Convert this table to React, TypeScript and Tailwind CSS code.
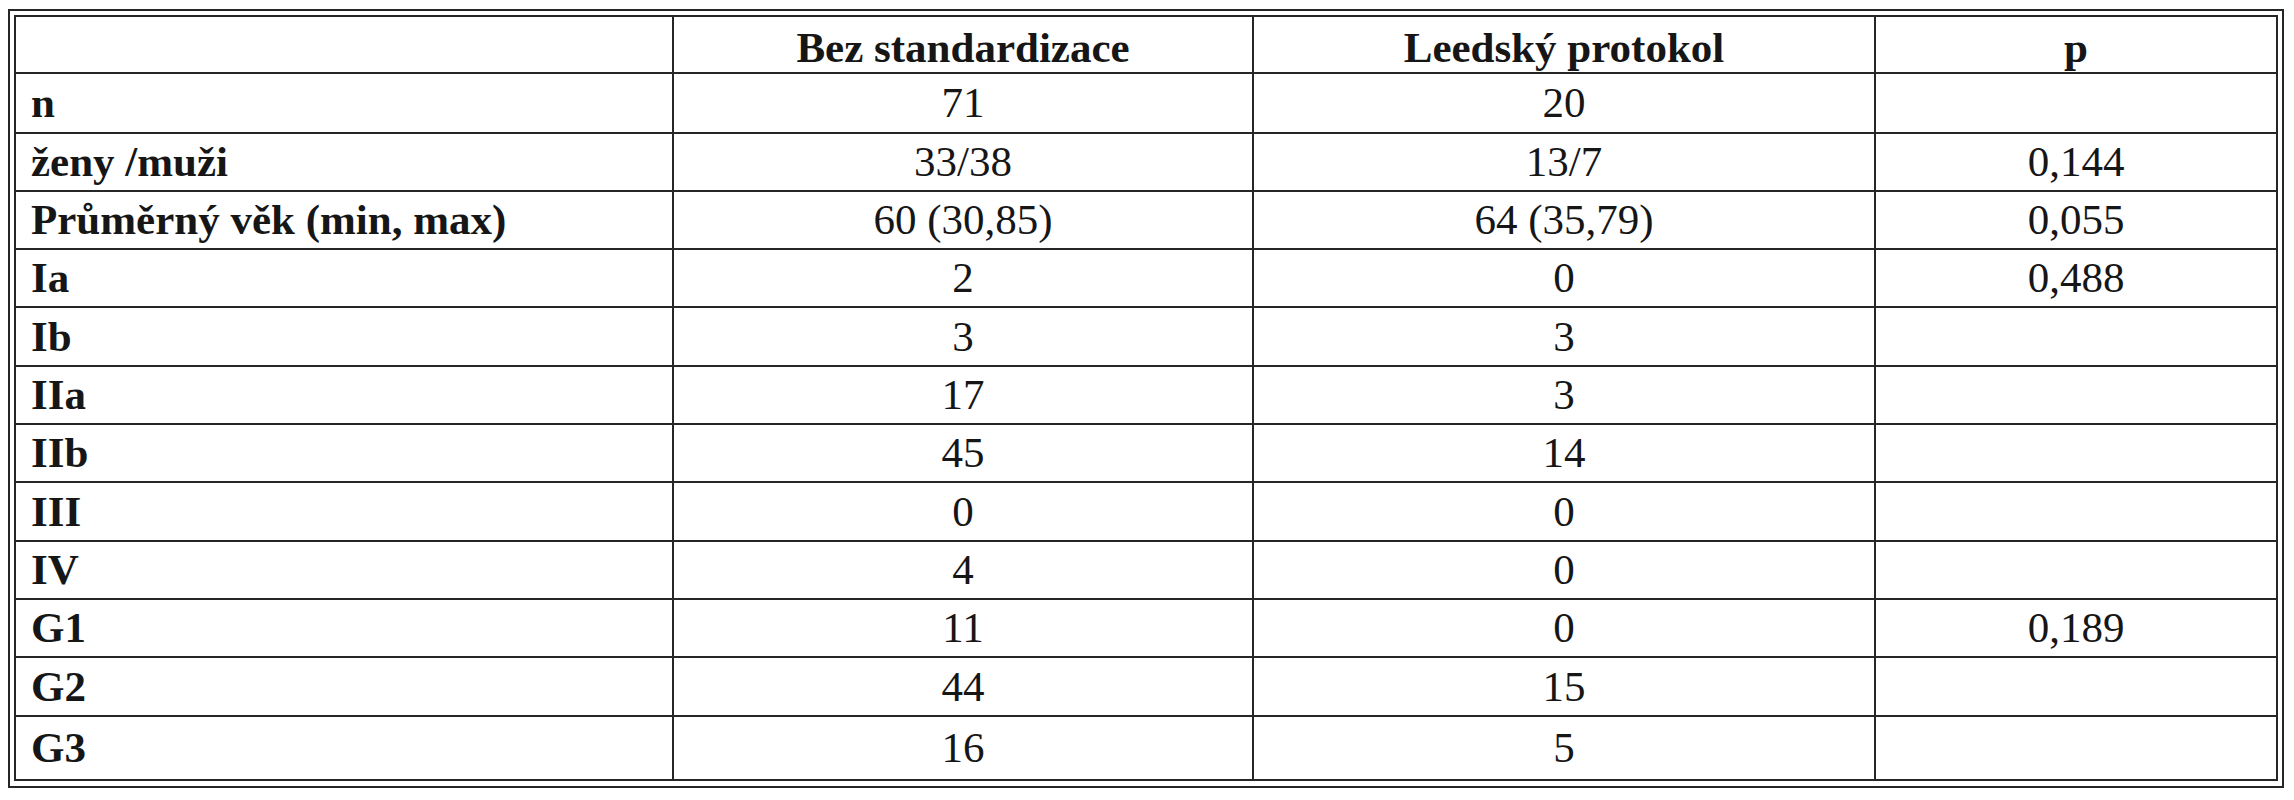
import React from "react";

type Row = { label: string; a: string; b: string; p: string; h: string };

const rows: Row[] = [
  { label: "n", a: "71", b: "20", p: "", h: "h-[60px]" },
  { label: "ženy /muži", a: "33/38", b: "13/7", p: "0,144", h: "h-[58px]" },
  { label: "Průměrný věk (min, max)", a: "60 (30,85)", b: "64 (35,79)", p: "0,055", h: "h-[58px]" },
  { label: "Ia", a: "2", b: "0", p: "0,488", h: "h-[58px]" },
  { label: "Ib", a: "3", b: "3", p: "", h: "h-[59px]" },
  { label: "IIa", a: "17", b: "3", p: "", h: "h-[58px]" },
  { label: "IIb", a: "45", b: "14", p: "", h: "h-[58px]" },
  { label: "III", a: "0", b: "0", p: "", h: "h-[59px]" },
  { label: "IV", a: "4", b: "0", p: "", h: "h-[58px]" },
  { label: "G1", a: "11", b: "0", p: "0,189", h: "h-[58px]" },
  { label: "G2", a: "44", b: "15", p: "", h: "h-[59px]" },
  { label: "G3", a: "16", b: "5", p: "", h: "h-[64px]" },
];

export default function App() {
  return (
    <div
      className="min-h-[800px] bg-white pt-[9px] pl-[8px] text-[#161616]"
      style={{ fontFamily: '"Liberation Serif", "Times New Roman", serif' }}
    >
      <div className="w-[2276px] border-2 border-[#262626] p-[4px] pb-[5px]">
        <div className="flex flex-col border-2 border-[#262626] text-[43px] leading-[1.15]">
          <div className="flex h-[55px] font-bold">
            <div className="w-[656px]" />
            <div className="flex w-[580px] items-center justify-center border-l-2 border-[#262626] pt-[6px]">
              Bez standardizace
            </div>
            <div className="flex w-[622px] items-center justify-center border-l-2 border-[#262626] pt-[6px]">
              Leedský protokol
            </div>
            <div className="flex w-[402px] items-center justify-center border-l-2 border-[#262626] pt-[6px]">
              p
            </div>
          </div>
          {rows.map((r) => (
            <div key={r.label} className={`flex border-t-2 border-[#262626] ${r.h}`}>
              <div className="flex w-[656px] items-center pl-[15px] font-bold">{r.label}</div>
              <div className="flex w-[580px] items-center justify-center border-l-2 border-[#262626]">
                {r.a}
              </div>
              <div className="flex w-[622px] items-center justify-center border-l-2 border-[#262626]">
                {r.b}
              </div>
              <div className="flex w-[402px] items-center justify-center border-l-2 border-[#262626]">
                {r.p}
              </div>
            </div>
          ))}
        </div>
      </div>
    </div>
  );
}
